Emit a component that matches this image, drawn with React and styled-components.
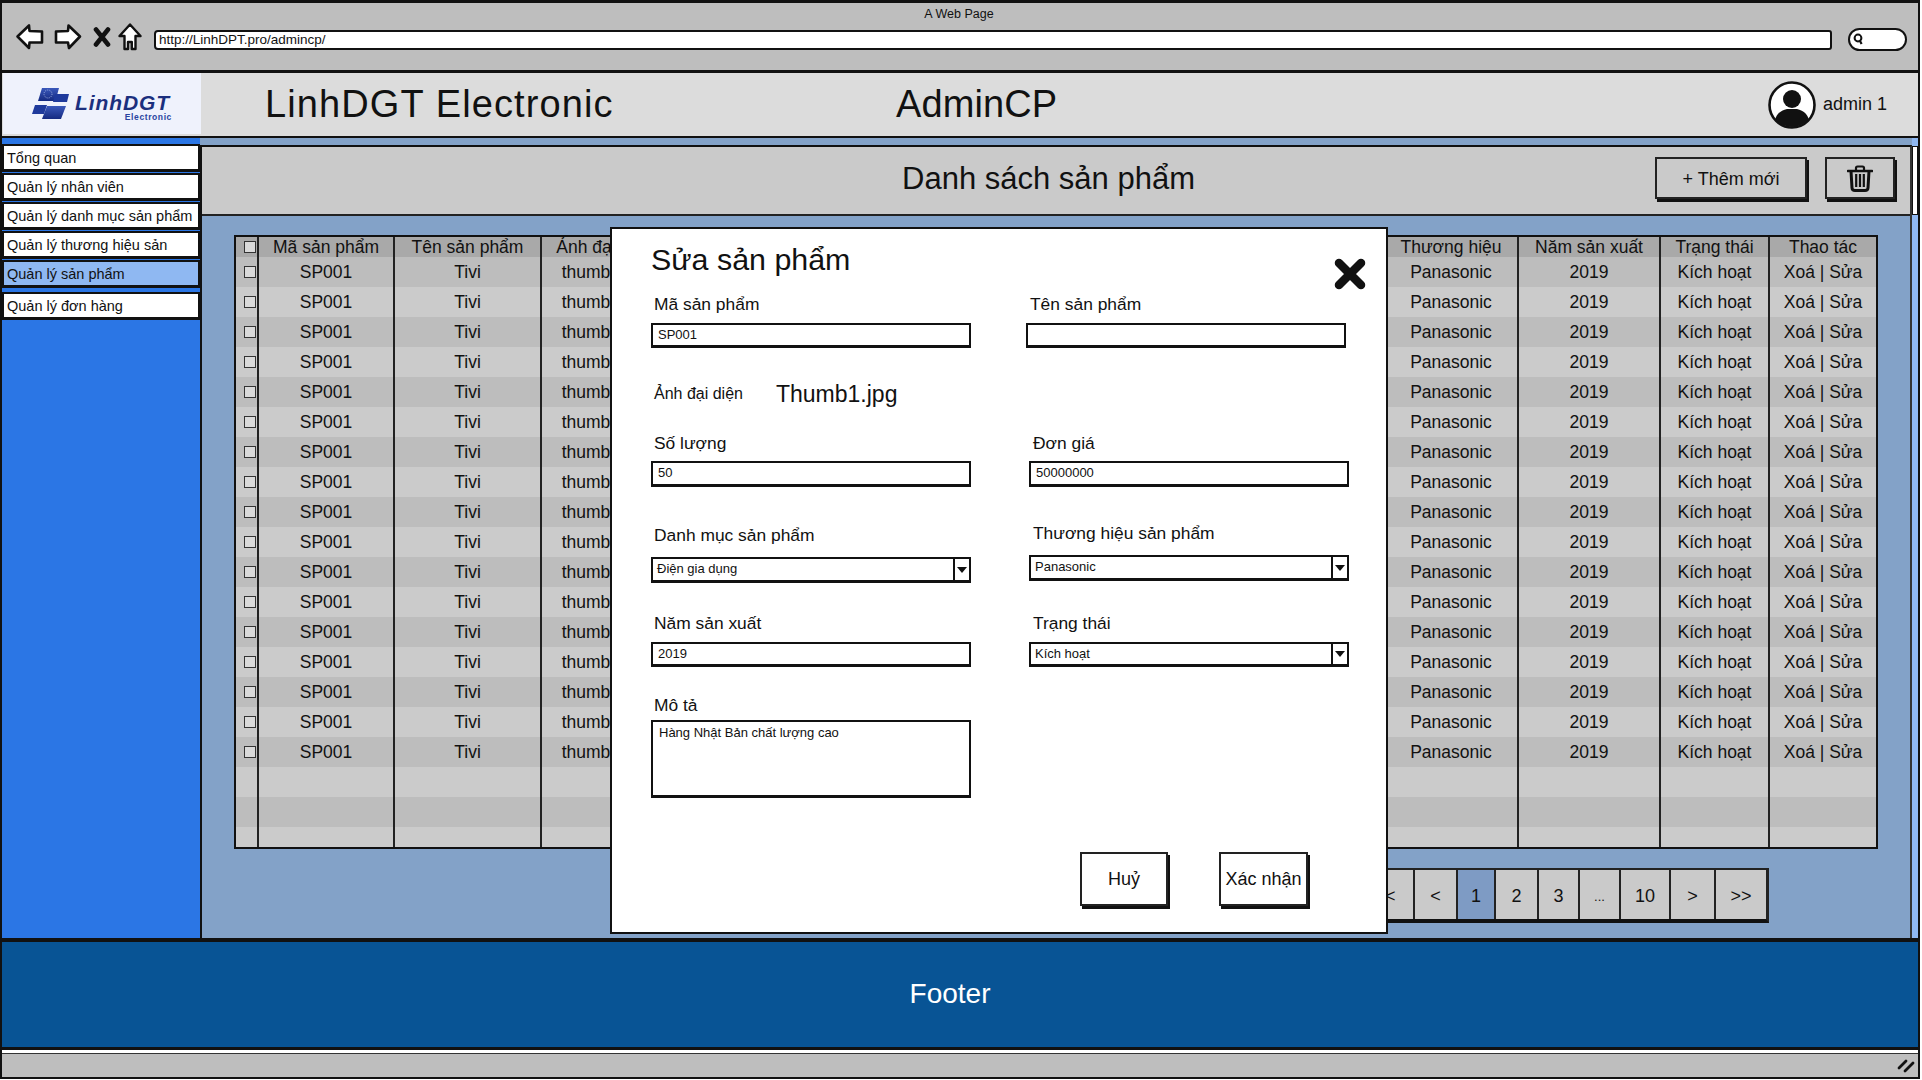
import React from "react";
import styled, { createGlobalStyle } from "styled-components";

const Global = createGlobalStyle`
  html, body { margin: 0; padding: 0; background: #fff; }
  * { box-sizing: border-box; }
  body { font-family: "Liberation Sans", Arial, sans-serif; color: #111; overflow: hidden; }
`;

const Frame = styled.div`
  position: relative;
  width: 1920px;
  height: 1079px;
  border: 2px solid #111;
  border-top-width: 3px;
  display: flex;
  flex-direction: column;
  overflow: hidden;
`;

/* ---------- browser chrome ---------- */
const BrowserBar = styled.div`
  height: 70px;
  flex: none;
  background: #bebebe;
  border-bottom: 3px solid #111;
  display: flex;
  flex-direction: column;
`;
const PageName = styled.div`
  height: 20px;
  font-size: 12.5px;
  line-height: 22px;
  text-align: center;
  padding-right: 2px;
`;
const BrowserControls = styled.div`
  display: flex;
  align-items: center;
  height: 28px;
  padding-left: 13px;
`;
const NavIcon = styled.svg`
  flex: none;
  display: block;
  margin-right: ${(p) => p.$gap}px;
`;
const UrlBox = styled.div`
  width: 1678px;
  height: 20px;
  margin-top: 5px;
  background: #fff;
  border: 2px solid #111;
  border-radius: 4px 3px 3px 4px;
  font-size: 13.5px;
  line-height: 16px;
  padding-left: 3px;
  flex: none;
`;
const SearchPill = styled.div`
  width: 59px;
  height: 23px;
  margin: 4px 0 0 16px;
  background: #fff;
  border: 2px solid #111;
  border-radius: 12px;
  display: flex;
  align-items: center;
  padding-left: 3px;
  flex: none;
`;

/* ---------- site header ---------- */
const Header = styled.header`
  height: 65px;
  flex: none;
  background: #dcdcdc;
  border-bottom: 2px solid #111;
  display: flex;
  align-items: center;
`;
const LogoPanel = styled.div`
  width: 198px;
  height: 61px;
  margin: 0 0 2px 1px;
  background: #eff2fc;
  display: flex;
  align-items: center;
  padding-left: 29px;
  flex: none;
`;
const LogoWords = styled.div`
  margin: 7px 0 0 6px;
  display: flex;
  flex-direction: column;
  align-items: flex-end;
  color: #1b2f7e;
  font-weight: 700;
`;
const LogoName = styled.div`
  font-size: 21px;
  line-height: 20px;
  font-style: italic;
  letter-spacing: 0.9px;
`;
const LogoSub = styled.div`
  font-size: 8.5px;
  line-height: 8px;
  letter-spacing: 0.6px;
  margin-right: -2px;
  color: #2a44a0;
`;
const SiteTitle = styled.div`
  width: ${(p) => p.$w}px;
  margin-left: ${(p) => p.$ml || 0}px;
  margin-bottom: 2px;
  font-size: 38px;
  line-height: 44px;
  letter-spacing: ${(p) => p.$ls || 0}px;
  flex: none;
`;
const UserBox = styled.div`
  margin-left: auto;
  margin-right: 31px;
  display: flex;
  align-items: center;
  gap: 7px;
  font-size: 18px;
`;

/* ---------- body ---------- */
const Body = styled.div`
  height: 800px;
  flex: none;
  display: flex;
  background: #83a2c8;
`;
const Sidebar = styled.nav`
  width: 198px;
  flex: none;
  background: #2b76e5;
  padding-top: 6px;
  display: flex;
  flex-direction: column;
`;
const NavItem = styled.div`
  height: 28px;
  margin: 0 0 ${(p) => p.$after}px 0;
  background: ${(p) => (p.$active ? "#8fb8f2" : "#fff")};
  border: 2px solid #111;
  border-bottom-width: 3px;
  font-size: 14.5px;
  line-height: 24px;
  padding-left: 3px;
  white-space: nowrap;
  overflow: hidden;
`;
const Main = styled.main`
  width: 1712px;
  flex: none;
  margin-top: 7px;
  border-left: 2px solid #111;
  border-top: 2px solid #111;
  border-right: 2px solid #333;
  display: flex;
  flex-direction: column;
`;
const Toolbar = styled.div`
  height: 69px;
  flex: none;
  background: #cacaca;
  border-bottom: 2px solid #222;
  padding-right: 15px;
  display: grid;
  align-items: center;
`;
const ToolbarTitle = styled.h1`
  grid-area: 1 / 1;
  margin: 0 0 3px 0;
  text-align: center;
  font-size: 31px;
  font-weight: 400;
`;
const ToolbarActions = styled.div`
  grid-area: 1 / 1;
  justify-self: end;
  display: flex;
  gap: 18px;
  margin-bottom: 6px;
`;
const SketchButton = styled.button`
  width: ${(p) => p.$w}px;
  height: ${(p) => p.$h}px;
  padding: ${(p) => p.$pt || 0}px 0 0 0;
  font: inherit;
  font-size: 18px;
  color: #111;
  background: ${(p) => p.$bg};
  border: 2px solid #222;
  box-shadow: 2px 3px 0 #111;
  display: flex;
  align-items: center;
  justify-content: center;
`;
const Content = styled.div`
  flex: 1;
  min-height: 0;
  background: #83a2c8;
  padding: 19px 32px 0 32px;
  display: flex;
  flex-direction: column;
`;
const Table = styled.table`
  width: 1644px;
  height: 614px;
  flex: none;
  table-layout: fixed;
  border-collapse: separate;
  border-spacing: 0;
  border: 2px solid #111;
  font-size: 17.5px;
  text-align: center;
`;
const HeadCell = styled.th`
  height: 20px;
  padding: 0;
  font-weight: 400;
  line-height: 20px;
  background: #a9a9a9;
  border-right: ${(p) => (p.$last ? "0" : "2px solid #222")};
  white-space: nowrap;
  overflow: hidden;
`;
const Cell = styled.td`
  height: ${(p) => p.$h}px;
  padding: 0;
  background: ${(p) => (p.$odd ? "#bdbdbd" : "#cbcbcb")};
  border-right: ${(p) => (p.$last ? "0" : "2px solid #222")};
  white-space: nowrap;
  overflow: hidden;
`;
const Check = styled.span`
  display: block;
  width: 12px;
  height: 12px;
  margin: 0 0 0 8px;
  border: 1.5px solid #333;
  background: #dadada;
`;
const Pager = styled.div`
  margin: 19px 0 0 1121px;
  width: 414px;
  height: 55px;
  display: flex;
  background: #cacaca;
  border: 2px solid #222;
  border-right-width: 3px;
  border-bottom: 4px solid #111;
  flex: none;
`;
const PageCell = styled.div`
  width: ${(p) => p.$w}px;
  flex: none;
  padding-top: 4px;
  background: ${(p) => (p.$active ? "#7e9bc4" : "#cacaca")};
  border-right: ${(p) => (p.$last ? "0" : "2px solid #222")};
  display: flex;
  align-items: center;
  justify-content: center;
  font-size: ${(p) => (p.$small ? 13 : 18)}px;
`;
const Rail = styled.div`
  width: 6px;
  flex: none;
  background: #8fb8f2;
`;
const RailThumb = styled.div`
  width: 6px;
  height: 69px;
  margin-top: 8px;
  background: #fff;
  border: 1px solid #111;
`;

/* ---------- footer ---------- */
const Footer = styled.footer`
  height: 112px;
  flex: none;
  background: #085495;
  border-top: 4px solid #111;
  border-bottom: 3px solid #111;
  color: #fff;
  font-size: 28px;
  display: flex;
  align-items: center;
  justify-content: center;
  padding: 0 20px 2px 0;
`;
const WhiteStrip = styled.div`
  height: 3px;
  flex: none;
  background: #fff;
`;
const StatusBar = styled.div`
  height: 24px;
  flex: none;
  background: #bebebe;
  border-top: 1px solid #333;
  display: flex;
  justify-content: flex-end;
  align-items: center;
  padding-right: 3px;
`;

/* ---------- modal ---------- */
const Modal = styled.section`
  position: absolute;
  left: 608px;
  top: 224px;
  width: 778px;
  height: 707px;
  background: #fff;
  border: 2px solid #111;
  padding: 12px 20px 0 39px;
  display: flex;
  flex-direction: column;
  z-index: 5;
`;
const ModalHead = styled.div`
  height: 40px;
  flex: none;
  display: flex;
  justify-content: space-between;
  align-items: flex-start;
`;
const ModalTitle = styled.h2`
  margin: 0;
  font-size: 30.4px;
  font-weight: 400;
  line-height: 37px;
`;
const CloseIcon = styled.svg`
  margin-top: 17px;
  display: block;
`;
const FormRow = styled.div`
  margin-top: ${(p) => p.$mt}px;
  display: grid;
  grid-template-columns: 320px 320px;
  column-gap: 58px;
  flex: none;
`;
const Field = styled.div`
  display: flex;
  flex-direction: column;
  margin-top: ${(p) => p.$up ? -p.$up : 0}px;
  margin-left: ${(p) => p.$left ? -p.$left : 0}px;
`;
const Label = styled.label`
  display: block;
  height: 24px;
  line-height: 25px;
  font-size: 17.4px;
  padding-left: ${(p) => p.$pl ?? 3}px;
  margin-bottom: ${(p) => p.$gap}px;
`;
const ThumbRow = styled.div`
  display: flex;
  align-items: center;
  height: 30px;
  padding-left: 3px;
  font-size: 16px;
  white-space: nowrap;
`;
const ThumbName = styled.span`
  margin-left: 33px;
  font-size: 23px;
`;
const Box = styled.div`
  width: 320px;
  height: ${(p) => p.$h}px;
  border: 2px solid #111;
  border-bottom-width: 3px;
  border-right-width: 2px;
  background: #fff;
  font-size: 13px;
  line-height: ${(p) => p.$h - 6}px;
  padding-left: 5px;
`;
const SelectBox = styled.div`
  width: 320px;
  height: ${(p) => p.$h}px;
  border: 2px solid #111;
  border-bottom-width: 3px;
  background: #fff;
  font-size: 13px;
  display: flex;
`;
const SelectValue = styled.div`
  flex: 1;
  padding-left: 4px;
  line-height: ${(p) => p.$h - 6}px;
`;
const Caret = styled.div`
  width: 16px;
  flex: none;
  border-left: 2px solid #111;
  display: flex;
  align-items: center;
  justify-content: center;
  &::after {
    content: "";
    border-left: 5px solid transparent;
    border-right: 5px solid transparent;
    border-top: 6px solid #111;
  }
`;
const TextArea = styled.div`
  width: 320px;
  height: 78px;
  border: 2px solid #111;
  border-bottom-width: 3px;
  background: #fff;
  font-size: 13px;
  padding: 3px 0 0 6px;
  line-height: 16px;
`;
const ModalActions = styled.div`
  margin-top: 54px;
  padding-left: 429px;
  display: flex;
  gap: 51px;
`;

const Select = ({ h, children }) => (
  <SelectBox $h={h}>
    <SelectValue $h={h}>{children}</SelectValue>
    <Caret />
  </SelectBox>
);

const cols = [23, 136, 147, 128, 715, 134, 142, 109, 106];
const menu = [
  ["Tổng quan", 1],
  ["Quản lý nhân viên", 1],
  ["Quản lý danh mục sản phẩm", 1],
  ["Quản lý thương hiệu sản", 1],
  ["Quản lý sản phẩm", 4, true],
  ["Quản lý đơn hàng", 0],
];
const pages = [
  ["<<", 58], ["<", 43], ["1", 38, true], ["2", 43], ["3", 41], ["...", 41, false, true], ["10", 50], [">", 45], [">>", 50],
];
const rowIds = Array.from({ length: 20 }, (_, i) => i);

const Arrow = ({ flip }) => (
  <NavIcon width="30" height="28" viewBox="0 0 30 28" $gap={flip ? 10 : 8}>
    <path
      d={flip ? "M3 8.5 L15 8 L15.5 2.5 L27 13.5 L16 25 L15 19.5 L3 19.5 Z" : "M2.5 13.5 L14 2.5 L14.5 8 L27 8.5 L27 19.5 L14.5 19.5 L14 25 Z"}
      fill="#fff" stroke="#111" strokeWidth="2.6" strokeLinejoin="round"
    />
  </NavIcon>
);

export default function App() {
  return (
    <>
      <Global />
      <Frame>
        <BrowserBar>
          <PageName>A Web Page</PageName>
          <BrowserControls>
            <Arrow />
            <Arrow flip />
            <NavIcon width="18" height="20" viewBox="0 0 18 20" $gap={7}>
              <path d="M3 2.5 L15 17.5 M15 2.5 L3 17.5" stroke="#111" strokeWidth="4.6" strokeLinecap="round" />
            </NavIcon>
            <NavIcon width="24" height="28" viewBox="0 0 24 28" $gap={12}>
              <path d="M12 1.5 L22.5 13 L17.5 13 L17.5 26 L13.8 26 L13.8 19 L10 19 L10 26 L6.5 26 L6.5 13 L1.5 13 Z" fill="#fff" stroke="#111" strokeWidth="2.4" strokeLinejoin="round" />
            </NavIcon>
            <UrlBox>http://LinhDPT.pro/admincp/</UrlBox>
            <SearchPill>
              <svg width="11" height="12" viewBox="0 0 11 12">
                <circle cx="5" cy="5" r="3.4" fill="none" stroke="#111" strokeWidth="2" />
                <path d="M7 8 L8.6 11" stroke="#111" strokeWidth="2.2" />
              </svg>
            </SearchPill>
          </BrowserControls>
        </BrowserBar>

        <Header>
          <LogoPanel>
            <svg width="37" height="33" viewBox="0 0 37 33">
              <defs>
                <linearGradient id="pg" x1="0" y1="0" x2="0" y2="1">
                  <stop offset="0" stopColor="#3a58bb" />
                  <stop offset="1" stopColor="#152a80" />
                </linearGradient>
              </defs>
              <path d="M10 1 L27 1 L23.5 14 L6 14 Z" fill="url(#pg)" />
              <circle cx="16" cy="7" r="4" fill="none" stroke="#b9c6ee" strokeWidth="0.8" strokeDasharray="1 1.2" />
              <path d="M23 7 L37 7 L35 15 L21 15 Z" fill="#1f3a9c" />
              <path d="M3 18 L15 18 L12 27 L0 27 Z" fill="#1f3a9c" />
              <path d="M15 19 L34 19 L29 32 L10 32 Z" fill="url(#pg)" />
            </svg>
            <LogoWords>
              <LogoName>LinhDGT</LogoName>
              <LogoSub>Electronic</LogoSub>
            </LogoWords>
          </LogoPanel>
          <SiteTitle $w={631} $ml={64} $ls={1.1}>LinhDGT Electronic</SiteTitle>
          <SiteTitle $w={180} $ls={0.1}>AdminCP</SiteTitle>
          <UserBox>
            <svg width="48" height="48" viewBox="0 0 48 48">
              <defs>
                <clipPath id="uc"><circle cx="24" cy="24" r="22" /></clipPath>
              </defs>
              <circle cx="24" cy="24" r="22.5" fill="#fff" stroke="#111" strokeWidth="2.6" />
              <g clipPath="url(#uc)">
                <circle cx="24" cy="18" r="9" fill="#111" />
                <path d="M6 48 C6 33 12 30 19 28 L29 28 C36 30 42 33 42 48 Z" fill="#111" />
              </g>
            </svg>
            admin 1
          </UserBox>
        </Header>

        <Body>
          <Sidebar>
            {menu.map(([t, a, act]) => (
              <NavItem key={t} $after={a} $active={act}>{t}</NavItem>
            ))}
          </Sidebar>
          <Main>
            <Toolbar>
              <ToolbarTitle>Danh sách sản phẩm</ToolbarTitle>
              <ToolbarActions>
                <SketchButton $w={152} $h={42} $bg="#cacaca" $pt={3}>+ Thêm mới</SketchButton>
                <SketchButton $w={70} $h={42} $bg="#cacaca" $pt={1}>
                  <svg width="26" height="27" viewBox="0 0 26 27">
                    <path d="M9 5 V3 Q9 1.5 10.5 1.5 H15.5 Q17 1.5 17 3 V5" fill="none" stroke="#111" strokeWidth="2.2" />
                    <path d="M1 6 H25" stroke="#111" strokeWidth="2.6" strokeLinecap="round" />
                    <path d="M4 6 L5 23 Q5.2 25.5 8 25.5 H18 Q20.8 25.5 21 23 L22 6" fill="none" stroke="#111" strokeWidth="3" />
                    <path d="M9.2 9 V22 M13 9 V22 M16.8 9 V22" stroke="#111" strokeWidth="2.2" />
                  </svg>
                </SketchButton>
              </ToolbarActions>
            </Toolbar>
            <Content>
              <Table>
                <colgroup>
                  {cols.map((w, i) => <col key={i} style={{ width: w }} />)}
                </colgroup>
                <thead>
                  <tr>
                    <HeadCell><Check /></HeadCell>
                    <HeadCell>Mã sản phẩm</HeadCell>
                    <HeadCell>Tên sản phẩm</HeadCell>
                    <HeadCell>Ảnh đại diện</HeadCell>
                    <HeadCell />
                    <HeadCell>Thương hiệu</HeadCell>
                    <HeadCell>Năm sản xuất</HeadCell>
                    <HeadCell>Trạng thái</HeadCell>
                    <HeadCell $last>Thao tác</HeadCell>
                  </tr>
                </thead>
                <tbody>
                  {rowIds.map((i) => {
                    const filled = i < 17;
                    const h = i === 19 ? 20 : 30;
                    const odd = i % 2 === 0;
                    return (
                      <tr key={i}>
                        <Cell $h={h} $odd={odd}>{filled && <Check />}</Cell>
                        <Cell $h={h} $odd={odd}>{filled && "SP001"}</Cell>
                        <Cell $h={h} $odd={odd}>{filled && "Tivi"}</Cell>
                        <Cell $h={h} $odd={odd}>{filled && "thumb1.jpg"}</Cell>
                        <Cell $h={h} $odd={odd} />
                        <Cell $h={h} $odd={odd}>{filled && "Panasonic"}</Cell>
                        <Cell $h={h} $odd={odd}>{filled && "2019"}</Cell>
                        <Cell $h={h} $odd={odd}>{filled && "Kích hoạt"}</Cell>
                        <Cell $h={h} $odd={odd} $last>{filled && "Xoá | Sửa"}</Cell>
                      </tr>
                    );
                  })}
                </tbody>
              </Table>
              <Pager>
                {pages.map(([t, w, act, small], i) => (
                  <PageCell key={t} $w={w} $active={act} $small={small} $last={i === pages.length - 1}>{t}</PageCell>
                ))}
              </Pager>
            </Content>
          </Main>
          <Rail><RailThumb /></Rail>
        </Body>

        <Footer>Footer</Footer>
        <WhiteStrip />
        <StatusBar>
          <svg width="18" height="14" viewBox="0 0 18 14">
            <path d="M2 9 L9 2 M8 12 L16 4" stroke="#111" strokeWidth="2.8" strokeLinecap="round" />
          </svg>
        </StatusBar>

        <Modal>
          <ModalHead>
            <ModalTitle>Sửa sản phẩm</ModalTitle>
            <CloseIcon width="32" height="32" viewBox="0 0 32 32">
              <path d="M5 5 L27 27 M27 5 L5 27" stroke="#111" strokeWidth="8.5" strokeLinecap="round" />
            </CloseIcon>
          </ModalHead>
          <FormRow $mt={11}>
            <Field>
              <Label $gap={7}>Mã sản phẩm</Label>
              <Box $h={25}>SP001</Box>
            </Field>
            <Field $left={3}>
              <Label $gap={7} $pl={4}>Tên sản phẩm</Label>
              <Box $h={25} />
            </Field>
          </FormRow>
          <FormRow $mt={31}>
            <ThumbRow>Ảnh đại diện<ThumbName>Thumb1.jpg</ThumbName></ThumbRow>
          </FormRow>
          <FormRow $mt={22}>
            <Field>
              <Label $gap={6}>Số lượng</Label>
              <Box $h={26}>50</Box>
            </Field>
            <Field>
              <Label $gap={6} $pl={4}>Đơn giá</Label>
              <Box $h={26}>50000000</Box>
            </Field>
          </FormRow>
          <FormRow $mt={36}>
            <Field>
              <Label $gap={10}>Danh mục sản phẩm</Label>
              <Select h={26}>Điện gia dụng</Select>
            </Field>
            <Field $up={2}>
              <Label $gap={10} $pl={4}>Thương hiệu sản phẩm</Label>
              <Select h={26}>Panasonic</Select>
            </Field>
          </FormRow>
          <FormRow $mt={28}>
            <Field>
              <Label $gap={7}>Năm sản xuất</Label>
              <Box $h={25}>2019</Box>
            </Field>
            <Field>
              <Label $gap={7} $pl={4}>Trạng thái</Label>
              <Select h={25}>Kích hoạt</Select>
            </Field>
          </FormRow>
          <FormRow $mt={26}>
            <Field>
              <Label $gap={3}>Mô tả</Label>
              <TextArea>Hàng Nhật Bản chất lượng cao</TextArea>
            </Field>
          </FormRow>
          <ModalActions>
            <SketchButton $w={88} $h={54} $bg="#fff">Huỷ</SketchButton>
            <SketchButton $w={89} $h={54} $bg="#fff">Xác nhận</SketchButton>
          </ModalActions>
        </Modal>
      </Frame>
    </>
  );
}
